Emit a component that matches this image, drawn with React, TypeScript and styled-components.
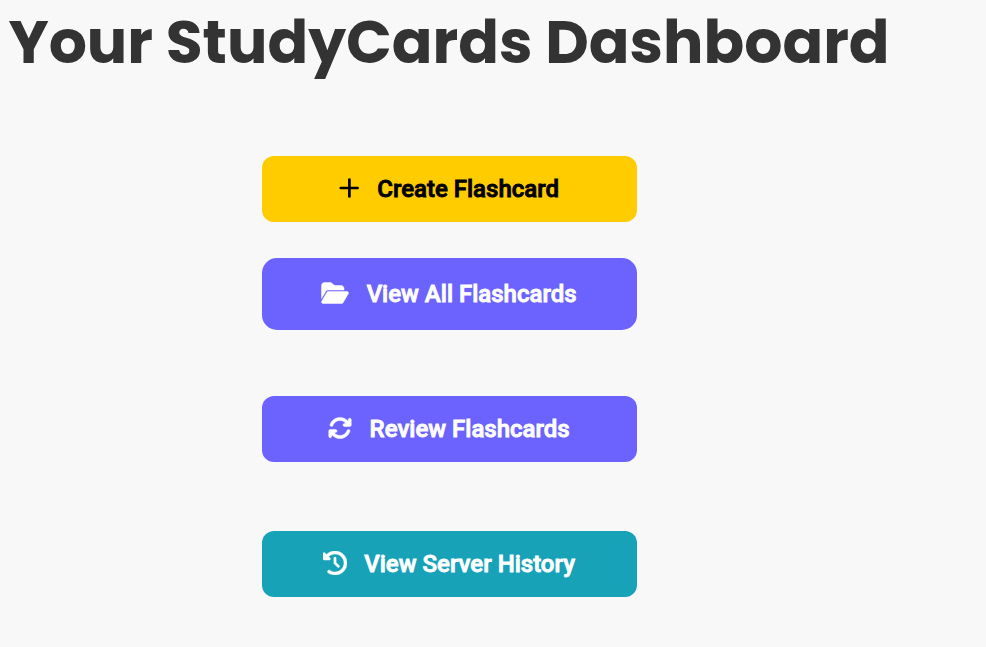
import React from "react";
import styled, { createGlobalStyle } from "styled-components";
import { FaFolderOpen, FaArrowsRotate, FaClockRotateLeft } from "react-icons/fa6";

const GlobalStyle = createGlobalStyle`
  * { box-sizing: border-box; }
  body { margin: 0; background: #f8f8f8; overflow: hidden; }
`;

const Page = styled.main`
  width: 899px;
  display: flex;
  flex-direction: column;
  align-items: center;
`;

const Title = styled.h1`
  margin: 0;
  width: 100%;
  height: 156px;
  padding-left: 8.4px;
  font: 700 60px/84px Poppins, Inter, sans-serif;
  color: #333;
  white-space: nowrap;
`;

const Action = styled.button<{ $bg: string; $fg?: string; $tall?: boolean; $gap?: number }>`
  width: 375px;
  height: ${(p) => (p.$tall ? 72 : 66)}px;
  margin: 0 0 ${(p) => p.$gap ?? 0}px;
  padding: 0 1px 0 0;
  border: 0;
  border-radius: ${(p) => (p.$tall ? 15 : 12)}px;
  display: flex;
  align-items: center;
  justify-content: center;
  background: ${(p) => p.$bg};
  color: ${(p) => p.$fg ?? "#fff"};
  font: 500 24px/36px Roboto, sans-serif;
  -webkit-text-stroke: 0.85px currentColor;
  white-space: nowrap;
`;

const Icon = styled.span<{ $width: number }>`
  display: flex;
  margin: 0 17.2px 2px 0;
  svg {
    width: ${(p) => p.$width}px;
    height: 24px;
    stroke: currentColor;
    stroke-width: 10;
  }
`;

const PlusIcon = styled.svg`
  && line {
    stroke-width: 2.7;
    stroke-linecap: round;
  }
`;

export default function App() {
  return (
    <>
      <GlobalStyle />
      <Page>
        <Title>Your StudyCards Dashboard</Title>
        <Action $bg="#ffcc00" $fg="#000" $gap={36}>
          <Icon $width={21}>
            <PlusIcon viewBox="0 0 21 24">
              <line x1="1.8" y1="12" x2="18.6" y2="12" />
              <line x1="10.4" y1="3.5" x2="10.4" y2="20.5" />
            </PlusIcon>
          </Icon>
          Create Flashcard
        </Action>
        <Action $bg="#6c63ff" $tall $gap={66}>
          <Icon $width={28}><FaFolderOpen /></Icon>
          View All Flashcards
        </Action>
        <Action $bg="#6c63ff" $gap={69}>
          <Icon $width={24}><FaArrowsRotate /></Icon>
          Review Flashcards
        </Action>
        <Action $bg="#17a2b8">
          <Icon $width={24}><FaClockRotateLeft /></Icon>
          View Server History
        </Action>
      </Page>
    </>
  );
}
